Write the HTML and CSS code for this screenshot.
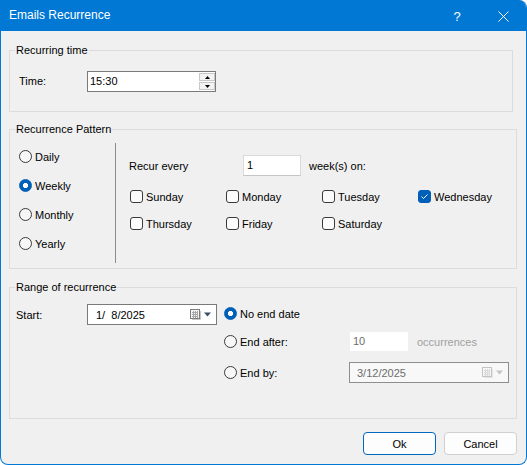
FILE: index.html
```html
<!DOCTYPE html>
<html lang="en">
<head>
    <meta charset="UTF-8">
    <title>Emails Recurrence</title>
    <link rel="stylesheet" href="styles.css">
</head>
<body>
    <div class="window">
        <div class="titlebar">
            <span class="title">Emails Recurrence</span>
            <span class="tb-btn help">?</span>
            <span class="tb-btn close">
                <svg width="11" height="11" viewBox="0 0 11 11"><path d="M0.5 0.5L10.5 10.5M10.5 0.5L0.5 10.5" stroke="#fff" stroke-width="1" fill="none"/></svg>
            </span>
        </div>
        <div class="content">
            <fieldset class="group g-time">
                <legend>Recurring time</legend>
                <div class="time-inner">
                    <span class="lbl time-lbl">Time:</span>
                    <div class="time-box">
                        <span class="val">15:30</span>
                        <div class="spin">
                            <span class="spin-btn"><svg width="5" height="3" viewBox="0 0 5 3"><path d="M2.5 0L5 3H0z" fill="#000"/></svg></span>
                            <span class="spin-btn"><svg width="5" height="3" viewBox="0 0 5 3"><path d="M0 0H5L2.5 3z" fill="#000"/></svg></span>
                        </div>
                    </div>
                </div>
            </fieldset>

            <fieldset class="group g-pattern">
                <legend>Recurrence Pattern</legend>
                <div class="pattern">
                    <div class="freq">
                        <div class="opt"><span class="radio"></span>Daily</div>
                        <div class="opt"><span class="radio on"></span>Weekly</div>
                        <div class="opt"><span class="radio"></span>Monthly</div>
                        <div class="opt"><span class="radio"></span>Yearly</div>
                    </div>
                    <div class="sep"></div>
                    <div class="recur">
                        <div class="recur-row">
                            <span class="lbl recur-lbl">Recur every</span>
                            <span class="num-box">1</span>
                            <span class="after">week(s) on:</span>
                        </div>
                        <div class="days">
                            <div class="opt"><span class="check"></span>Sunday</div>
                            <div class="opt"><span class="check"></span>Monday</div>
                            <div class="opt"><span class="check"></span>Tuesday</div>
                            <div class="opt"><span class="check on"><svg width="11" height="11" viewBox="0 0 11 11"><path d="M2.5 5.5L4.5 7.5L8.5 3.5" stroke="#fff" stroke-width="1" fill="none"/></svg></span>Wednesday</div>
                            <div class="opt"><span class="check"></span>Thursday</div>
                            <div class="opt"><span class="check"></span>Friday</div>
                            <div class="opt"><span class="check"></span>Saturday</div>
                        </div>
                    </div>
                </div>
            </fieldset>

            <fieldset class="group g-range">
                <legend>Range of recurrence</legend>
                <div class="range">
                    <div class="start">
                        <span class="lbl start-lbl">Start:</span>
                        <div class="date-box">
                            <span class="val">1/&#8199;8/2025</span>
                            <svg class="cal" width="22" height="12" viewBox="0 0 22 12">
                                <rect x="0.5" y="0.5" width="9" height="9" fill="#f4f4f4" stroke="#7e7e7e"/>
                                <path d="M2 3.5H8M2 5.5H8M2 7.5H8M3.5 2V9M5.5 2V9M7.5 2V9" stroke="#a8a8a8" stroke-width="1"/>
                                <path d="M10.5 2V10.5H2" stroke="#c8c8c8" fill="none"/>
                                <path d="M14 3.5H21L17.5 7.5z" fill="#3f4e63"/>
                            </svg>
                        </div>
                    </div>
                    <div class="ends">
                        <div class="end-row r1">
                            <div class="opt end-opt"><span class="radio on"></span>No end date</div>
                        </div>
                        <div class="end-row r2">
                            <div class="opt end-opt"><span class="radio"></span>End after:</div>
                            <span class="count-box">10</span>
                            <span class="muted">occurrences</span>
                        </div>
                        <div class="end-row r3">
                            <div class="opt end-opt"><span class="radio"></span>End by:</div>
                            <div class="date-box off">
                                <span class="val">3/12/2025</span>
                                <svg class="cal" width="22" height="12" viewBox="0 0 22 12">
                                    <rect x="0.5" y="0.5" width="9" height="9" fill="#f7f7f7" stroke="#c4c4c4"/>
                                    <path d="M2 3.5H8M2 5.5H8M2 7.5H8M3.5 2V9M5.5 2V9M7.5 2V9" stroke="#dadada" stroke-width="1"/>
                                    <path d="M10.5 2V10.5H2" stroke="#e4e4e4" fill="none"/>
                                    <path d="M14 3.5H21L17.5 7.5z" fill="#c4c4c4"/>
                                </svg>
                            </div>
                        </div>
                    </div>
                </div>
            </fieldset>

            <div class="buttons">
                <button class="btn default">Ok</button>
                <button class="btn">Cancel</button>
            </div>
        </div>
    </div>
</body>
</html>
```

FILE: styles.css
```css
body{
    margin: 0;
    background: #fff;
    font-family: "Liberation Sans", Arial, sans-serif;
    font-size: 11px;
    color: #000;
}
.window{
    width: 527px;
    height: 465px;
    box-sizing: border-box;
    border: 1px solid #0078d4;
    border-top: 0;
    border-radius: 0 8px 8px 8px;
    background: #f0f0f0;
    overflow: hidden;
}
.titlebar{
    height: 31px;
    background: #0078d4;
    color: #fff;
    display: flex;
    align-items: center;
}
.title{
    flex: 1;
    padding-left: 8px;
    font-size: 12px;
    padding-bottom: 1px;
}
.tb-btn{
    width: 46px;
    height: 31px;
    display: flex;
    align-items: center;
    justify-content: center;
}
.help{
    font-size: 13px;
    padding-top: 1px;
}
.close svg{
    display: block;
    margin-top: 2px;
}

.content{
    padding: 12px 0 0 8px;
}
.group{
    margin: 0;
    padding: 0;
    border: 1px solid #dcdcdc;
    min-width: 0;
    width: 508px;
    box-sizing: border-box;
}
.group legend{
    margin-left: 5px;
    padding: 0 1px;
    font-size: 11px;
    line-height: 15px;
}
.g-time{
    width: 504px;
}
.g-pattern{
    margin-top: 10px;
}
.g-range{
    margin-top: 11px;
}
.opt{
    display: flex;
    align-items: center;
    white-space: nowrap;
    font-weight: normal;
}

/* radios and checks */
.radio{
    width: 13px;
    height: 13px;
    box-sizing: border-box;
    border: 1px solid #3a3a3a;
    border-radius: 50%;
    background: #f7f7f7;
    margin-right: 3px;
    flex: none;
}
.radio.on{
    border-color: #005fb8;
    background: radial-gradient(circle, #fff 2.3px, #005fb8 2.9px);
}
.check{
    width: 13px;
    height: 13px;
    box-sizing: border-box;
    border: 1px solid #3a3a3a;
    border-radius: 3px;
    background: #fbfbfb;
    margin-right: 3px;
    flex: none;
}
.check.on{
    border-color: #005fb8;
    background: #005fb8;
}
.check svg{
    display: block;
}

/* time */
.time-inner{
    height: 53px;
    box-sizing: border-box;
    padding: 13px 0 0 9px;
    display: flex;
    align-items: flex-start;
}
.time-lbl{
    width: 68px;
    line-height: 21px;
}
.time-box{
    width: 129px;
    height: 21px;
    box-sizing: border-box;
    border: 1px solid #7a7a7a;
    background: #fff;
    display: flex;
    align-items: flex-start;
    padding-left: 2px;
}
.time-box .val{
    flex: 1;
    line-height: 19px;
}
.spin{
    display: flex;
    flex-direction: column;
    gap: 1px;
    padding-top: 1px;
}
.spin-btn{
    width: 16px;
    height: 8px;
    box-sizing: border-box;
    border: 1px solid #c8c8c8;
    background: #f3f3f3;
    display: flex;
    align-items: center;
    justify-content: center;
}
.spin-btn svg{
    display: block;
}

/* pattern */
.pattern{
    display: flex;
    height: 131px;
}
.freq{
    width: 105px;
    box-sizing: border-box;
    padding: 5px 0 0 9px;
}
.freq .opt{
    height: 29px;
}
.sep{
    width: 1px;
    background: #8c8c8c;
    margin: 6px 0 5px;
}
.recur{
    flex: 1;
    padding: 18px 0 0 13px;
}
.recur-row{
    display: flex;
    align-items: center;
    height: 21px;
}
.recur-lbl{
    width: 114px;
}
.num-box{
    width: 58px;
    height: 21px;
    box-sizing: border-box;
    border: 1px solid #dadada;
    border-bottom-color: #c4c4c4;
    background: #fff;
    padding-left: 3px;
    line-height: 19px;
}
.after{
    margin-left: 8px;
}
.days{
    display: grid;
    grid-template-columns: repeat(4, 96px);
    grid-auto-rows: 27px;
    margin-top: 7px;
    padding-left: 1px;
}

/* range */
.range{
    display: flex;
    height: 123px;
}
.start{
    display: flex;
    align-items: center;
    height: 21px;
    margin-top: 9px;
    padding-left: 6px;
}
.start-lbl{
    width: 71px;
}
.date-box{
    width: 130px;
    height: 21px;
    box-sizing: border-box;
    border: 1px solid #7a7a7a;
    background: #fff;
    display: flex;
    align-items: center;
    padding: 0 4px 0 8px;
}
.date-box .val{
    flex: 1;
}
.cal{
    display: block;
    margin-top: 1px;
}
.date-box.off{
    width: 160px;
    border-color: #8e8e8e;
    background: #f8f8f8;
    color: #6d6d6d;
    padding-left: 7px;
}
.ends{
    margin-left: 7px;
}
.end-row{
    display: flex;
    align-items: center;
    height: 21px;
}
.end-row.r1{
    margin-top: 8px;
}
.end-row.r2{
    margin-top: 7px;
}
.end-row.r3{
    margin-top: 10px;
}
.end-opt{
    width: 125px;
}
.count-box{
    width: 58px;
    height: 19px;
    margin-left: 1px;
    background: #fff;
    padding-left: 3px;
    box-sizing: border-box;
    line-height: 19px;
    color: #6d6d6d;
}
.muted{
    margin-left: 9px;
    color: #a0a0a0;
}

/* buttons */
.buttons{
    display: flex;
    justify-content: flex-end;
    gap: 8px;
    margin: 13px 9px 0 0;
}
.btn{
    width: 73px;
    height: 23px;
    box-sizing: border-box;
    border: 1px solid #d0d0d0;
    border-radius: 4px;
    background: #fdfdfd;
    font-family: "Liberation Sans", Arial, sans-serif;
    font-size: 11px;
    color: #000;
    padding: 0;
}
.btn.default{
    border-color: #0067c0;
}
```
